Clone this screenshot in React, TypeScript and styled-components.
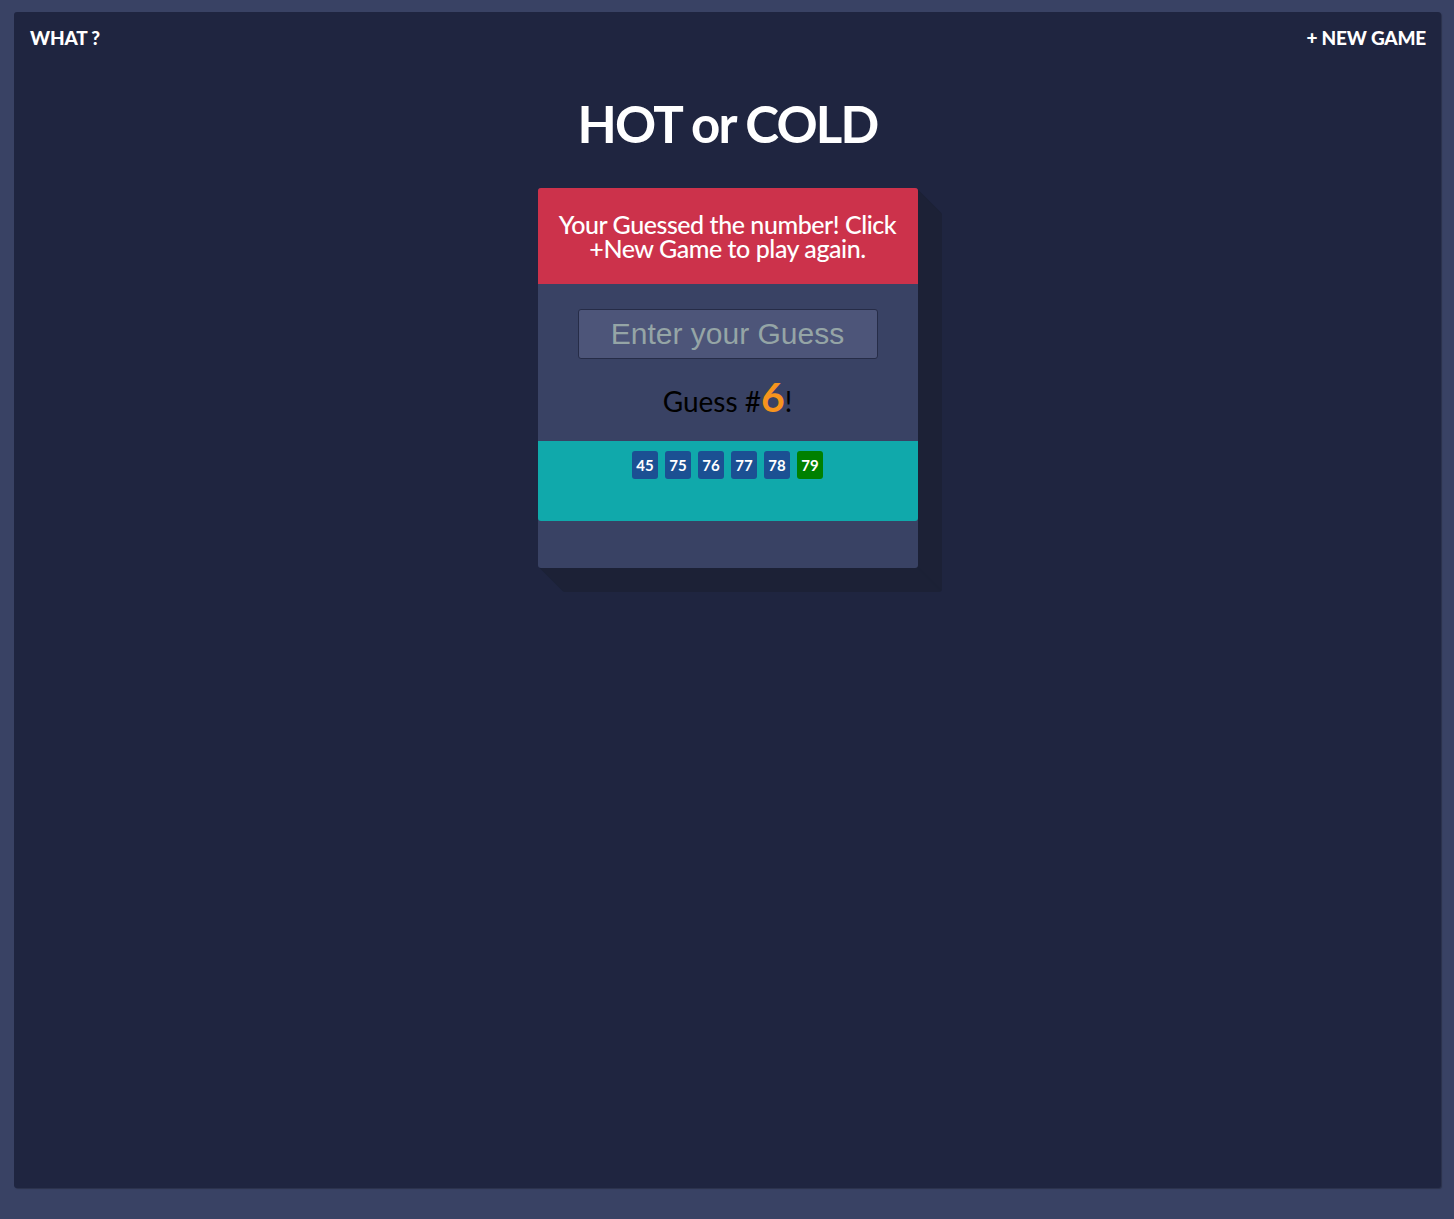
import React from "react";
import styled, { createGlobalStyle } from "styled-components";

const Global = createGlobalStyle`
  html, body { margin: 0; padding: 0; }
  body {
    background: #394264;
    font-family: Lato, "Open Sans", sans-serif;
    min-height: 1219px;
  }
`;

const Page = styled.div`
  padding: 12px 13px 31px 14px;
  box-sizing: border-box;
  height: 1219px;
`;

const Panel = styled.div`
  background: #1f2540;
  height: 100%;
  border-radius: 3px;
  box-shadow: 1px 1px 1px rgba(0, 0, 0, 0.25);
  display: flex;
  flex-direction: column;
  align-items: center;
`;

const Nav = styled.nav`
  align-self: stretch;
  display: flex;
  justify-content: space-between;
  padding: 14px 15px 0 16px;
`;

const NavLink = styled.a`
  color: #fff;
  font-weight: 900;
  font-size: 19px;
  letter-spacing: -0.2px;
  line-height: 24px;
  text-decoration: none;
`;

const Title = styled.h1`
  margin: 44px 0 0;
  color: #fff;
  font-weight: 700;
  font-size: 51px;
  letter-spacing: -1.8px;
  line-height: 60px;
`;

const longShadow = Array.from({ length: 24 }, (_, i) => `${i + 1}px ${i + 1}px 0 #1c2136`).join(", ");

const Card = styled.section`
  margin-top: 34px;
  width: 380px;
  background: #394264;
  border-radius: 3px;
  box-shadow: ${longShadow};
  display: flex;
  flex-direction: column;
  padding-bottom: 47px;
`;

const Feedback = styled.h2`
  margin: 0;
  background: #cc324b;
  border-radius: 3px 3px 0 0;
  color: #fff;
  font-weight: 500;
  font-size: 25px;
  letter-spacing: -0.45px;
  line-height: 24px;
  text-align: center;
  padding: 24px 8px 24px;
  height: 96px;
  box-sizing: border-box;
`;

const Form = styled.form`
  display: flex;
  flex-direction: column;
  align-items: center;
  padding: 25px 0 0;
  height: 157px;
  box-sizing: border-box;
`;

const Input = styled.input`
  width: 300px;
  height: 50px;
  box-sizing: border-box;
  background: #4d5579;
  border: 1px solid #262c47;
  border-radius: 3px;
  font-family: "Liberation Sans", Arial, sans-serif;
  font-size: 30px;
  text-align: center;
  color: #fff;
  outline: none;
  &::placeholder { color: #95a5a6; }
`;

const Count = styled.p`
  margin: 22px 0 0;
  font-size: 28px;
  color: #000;
  line-height: 32px;
`;

const Num = styled.span`
  color: #f7941d;
  font-weight: 700;
  font-size: 41px;
`;

const Guesses = styled.ul`
  list-style: none;
  margin: 0;
  padding: 10px 0 0;
  height: 80px;
  box-sizing: border-box;
  background: #10a9ab;
  border-radius: 0 0 3px 3px;
  display: flex;
  justify-content: center;
  gap: 7px;
`;

const Chip = styled.li<{ $hit?: boolean }>`
  width: 26px;
  height: 28px;
  border-radius: 3px;
  background: ${(p) => (p.$hit ? "#008000" : "#1b5093")};
  color: #fff;
  font-weight: 700;
  font-size: 15px;
  display: flex;
  align-items: center;
  justify-content: center;
`;

const guesses = [45, 75, 76, 77, 78, 79];

export default function App() {
  return (
    <>
      <Global />
      <Page>
        <Panel>
          <Nav>
            <NavLink href="#">WHAT ?</NavLink>
            <NavLink href="#">+ NEW GAME</NavLink>
          </Nav>
          <Title>HOT or COLD</Title>
          <Card>
            <Feedback>Your Guessed the number! Click +New Game to play again.</Feedback>
            <Form onSubmit={(e) => e.preventDefault()}>
              <Input placeholder="Enter your Guess" />
              <Count>
                Guess #<Num>6</Num>!
              </Count>
            </Form>
            <Guesses>
              {guesses.map((g, i) => (
                <Chip key={g} $hit={i === guesses.length - 1}>
                  {g}
                </Chip>
              ))}
            </Guesses>
          </Card>
        </Panel>
      </Page>
    </>
  );
}
